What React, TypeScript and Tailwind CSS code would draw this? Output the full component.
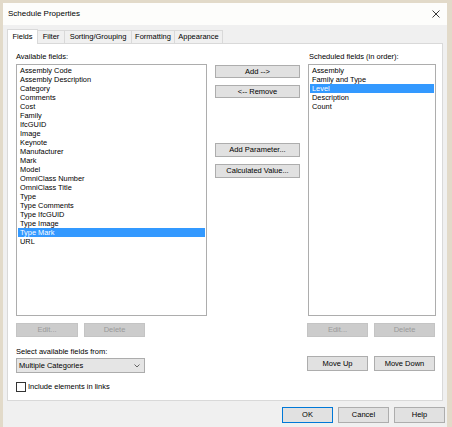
import React from "react";

const font = { fontFamily: '"Liberation Sans", Arial, sans-serif' };

function Btn({ children, w, h = 14, disabled = false, primary = false }: { children: React.ReactNode; w: number; h?: number; disabled?: boolean; primary?: boolean }) {
  return (
    <div
      className={
        "flex items-center justify-center text-[7.5px] leading-none border " +
        (disabled
          ? "bg-[#cccccc] border-[#c4c4c4] text-[#9a9a9a]"
          : primary
          ? "bg-[#e1e1e1] border-[#0078d7] text-black"
          : "bg-[#e1e1e1] border-[#adadad] text-black")
      }
      style={{ width: w, height: h }}
    >
      {children}
    </div>
  );
}

const available = [
  "Assembly Code",
  "Assembly Description",
  "Category",
  "Comments",
  "Cost",
  "Family",
  "IfcGUID",
  "Image",
  "Keynote",
  "Manufacturer",
  "Mark",
  "Model",
  "OmniClass Number",
  "OmniClass Title",
  "Type",
  "Type Comments",
  "Type IfcGUID",
  "Type Image",
  "Type Mark",
  "URL",
];

const scheduled = ["Assembly", "Family and Type", "Level", "Description", "Count"];

function ListBox({ items, selected, w }: { items: string[]; selected: string; w: number }) {
  return (
    <div className="bg-white border border-[#adadad] pt-[1px] px-[1px]" style={{ width: w, height: 252 }}>
      {items.map((it) => (
        <div
          key={it}
          className={
            "h-[9px] leading-[9px] text-[7.4px] pl-[2px] whitespace-nowrap " +
            (it === selected ? "bg-[#3399ff] text-white" : "text-black")
          }
        >
          {it}
        </div>
      ))}
    </div>
  );
}

export default function App() {
  const tabs = ["Fields", "Filter", "Sorting/Grouping", "Formatting", "Appearance"];
  return (
    <div className="w-[452px] h-[427px] bg-[#e2dac9] pt-[3px] pl-[3px] pr-[5px] flex flex-col" style={font}>
      {/* title bar */}
      <div className="h-[22px] bg-[#fdfdfb] flex items-center justify-between pl-[5px] pr-[7px] shrink-0">
        <span className="text-[8px] text-black">Schedule Properties</span>
        <svg width="8" height="8" viewBox="0 0 8 8">
          <path d="M0.5 0.5 L7.5 7.5 M7.5 0.5 L0.5 7.5" stroke="#222" strokeWidth="0.9" />
        </svg>
      </div>
      {/* body */}
      <div className="flex-1 bg-[#f0f0f0] flex flex-col">
        {/* tabs */}
        <div className="h-[18px] pl-[4px] flex items-end shrink-0">
          <div className="h-[15px] w-[31px] bg-white border border-b-0 border-[#d9d9d9] flex items-center justify-center text-[7.5px] relative top-[1px] z-10 pb-[1px]">
            Fields
          </div>
          {tabs.slice(1).map((t, i) => (
            <div
              key={t}
              className="h-[13px] border border-b-0 border-l-0 border-[#d9d9d9] bg-[#f0f0f0] flex items-center justify-center text-[7.5px]"
              style={{ width: [27, 67, 43, 48][i] }}
            >
              {t}
            </div>
          ))}
        </div>
        {/* panel */}
        <div className="ml-[4px] w-[436px] h-[358px] bg-white border border-[#d9d9d9] pt-[8px] pl-[8px] flex gap-[8px] text-[7.5px]">
          {/* left column */}
          <div className="flex flex-col w-[191px]">
            <div className="h-[10px] leading-[10px]">Available fields:</div>
            <div className="mt-[2px]">
              <ListBox items={available} selected="Type Mark" w={191} />
            </div>
            <div className="mt-[7px] flex gap-[6px]">
              <Btn w={62} disabled>
                Edit...
              </Btn>
              <Btn w={61} disabled>
                Delete
              </Btn>
            </div>
            <div className="mt-[10px] h-[10px] leading-[10px]">Select available fields from:</div>
            <div className="mt-[1px] w-[129px] h-[15px] bg-[#e5e5e5] border border-[#acacac] flex items-center justify-between pl-[2px] pr-[4px]">
              <span>Multiple Categories</span>
              <svg width="6" height="4" viewBox="0 0 6 4">
                <path d="M0.5 0.5 L3 3 L5.5 0.5" stroke="#444" strokeWidth="0.8" fill="none" />
              </svg>
            </div>
            <div className="mt-[9px] flex items-center gap-[2px] h-[10px]">
              <div className="w-[10px] h-[10px] border border-[#333] bg-white" />
              <span>Include elements in links</span>
            </div>
          </div>
          {/* middle column */}
          <div className="flex flex-col w-[85px]">
            <div className="mt-[13px]">
              <Btn w={85} h={13}>
                Add --&gt;
              </Btn>
            </div>
            <div className="mt-[7px]">
              <Btn w={85} h={13}>
                &lt;-- Remove
              </Btn>
            </div>
            <div className="mt-[45px]">
              <Btn w={85}>Add Parameter...</Btn>
            </div>
            <div className="mt-[7px]">
              <Btn w={85}>Calculated Value...</Btn>
            </div>
          </div>
          {/* right column */}
          <div className="flex flex-col w-[128px]">
            <div className="h-[10px] leading-[10px] pl-[1px]">Scheduled fields (in order):</div>
            <div className="mt-[2px]">
              <ListBox items={scheduled} selected="Level" w={128} />
            </div>
            <div className="mt-[7px] flex gap-[6px] -ml-[1px]">
              <Btn w={61} disabled>
                Edit...
              </Btn>
              <Btn w={61} disabled>
                Delete
              </Btn>
            </div>
            <div className="mt-[19px] flex gap-[6px] -ml-[1px]">
              <Btn w={61} h={15}>
                Move Up
              </Btn>
              <Btn w={61} h={15}>
                Move Down
              </Btn>
            </div>
          </div>
        </div>
        {/* footer */}
        <div className="flex justify-end gap-[5px] pr-[2px] pt-[6px]">
          <Btn w={51} h={16} primary>
            OK
          </Btn>
          <Btn w={51} h={16}>
            Cancel
          </Btn>
          <Btn w={51} h={16}>
            Help
          </Btn>
        </div>
      </div>
    </div>
  );
}
